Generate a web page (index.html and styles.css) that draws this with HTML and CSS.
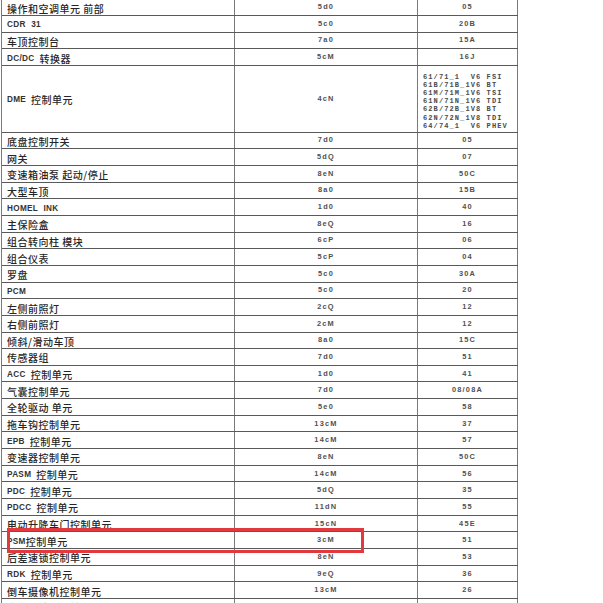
FILE: index.html
```html
<!DOCTYPE html>
<html lang="zh-CN">
<head>
<meta charset="utf-8">
<title>控制单元列表</title>
<link rel="stylesheet" href="styles.css">
</head>
<body>
<div class="sheet">
  <div class="row"><div class="name">操作和空调单元 前部</div><div class="code">5d0</div><div class="num">05</div></div>
  <div class="row"><div class="name"><span class="lat">CDR 31</span></div><div class="code">5c0</div><div class="num">20B</div></div>
  <div class="row"><div class="name">车顶控制台</div><div class="code">7a0</div><div class="num">15A</div></div>
  <div class="row"><div class="name"><span class="lat gap">DC/DC</span>转换器</div><div class="code">5cM</div><div class="num">16J</div></div>
  <div class="row tall"><div class="name"><span class="lat gap">DME</span>控制单元</div><div class="code">4cN</div><div class="num list">61/71_1  V6 FSI
61B/71B_1V6 BT
61M/71M_1V6 TSI
61N/71N_1V6 TDI
62B/72B_1V8 BT
62N/72N_1V8 TDI
64/74_1  V6 PHEV</div></div>
  <div class="row"><div class="name">底盘控制开关</div><div class="code">7d0</div><div class="num">05</div></div>
  <div class="row"><div class="name">网关</div><div class="code">5dQ</div><div class="num">07</div></div>
  <div class="row"><div class="name">变速箱油泵 起动/停止</div><div class="code">8eN</div><div class="num">50C</div></div>
  <div class="row"><div class="name">大型车顶</div><div class="code">8a0</div><div class="num">15B</div></div>
  <div class="row"><div class="name"><span class="lat">HOMEL INK</span></div><div class="code">1d0</div><div class="num">40</div></div>
  <div class="row"><div class="name">主保险盒</div><div class="code">8eQ</div><div class="num">16</div></div>
  <div class="row"><div class="name">组合转向柱 模块</div><div class="code">6cP</div><div class="num">06</div></div>
  <div class="row"><div class="name">组合仪表</div><div class="code">5cP</div><div class="num">04</div></div>
  <div class="row"><div class="name">罗盘</div><div class="code">5c0</div><div class="num">30A</div></div>
  <div class="row"><div class="name"><span class="lat">PCM</span></div><div class="code">5c0</div><div class="num">20</div></div>
  <div class="row"><div class="name">左侧前照灯</div><div class="code">2cQ</div><div class="num">12</div></div>
  <div class="row"><div class="name">右侧前照灯</div><div class="code">2cM</div><div class="num">12</div></div>
  <div class="row"><div class="name">倾斜/滑动车顶</div><div class="code">8a0</div><div class="num">15C</div></div>
  <div class="row"><div class="name">传感器组</div><div class="code">7d0</div><div class="num">51</div></div>
  <div class="row"><div class="name"><span class="lat gap">ACC</span>控制单元</div><div class="code">1d0</div><div class="num">41</div></div>
  <div class="row"><div class="name">气囊控制单元</div><div class="code">7d0</div><div class="num">08/08A</div></div>
  <div class="row"><div class="name">全轮驱动 单元</div><div class="code">5e0</div><div class="num">58</div></div>
  <div class="row"><div class="name">拖车钩控制单元</div><div class="code">13cM</div><div class="num">37</div></div>
  <div class="row"><div class="name"><span class="lat gap">EPB</span>控制单元</div><div class="code">14cM</div><div class="num">57</div></div>
  <div class="row"><div class="name">变速器控制单元</div><div class="code">8eN</div><div class="num">50C</div></div>
  <div class="row"><div class="name"><span class="lat gap">PASM</span>控制单元</div><div class="code">14cM</div><div class="num">56</div></div>
  <div class="row"><div class="name"><span class="lat gap">PDC</span>控制单元</div><div class="code">5dQ</div><div class="num">35</div></div>
  <div class="row"><div class="name"><span class="lat gap">PDCC</span>控制单元</div><div class="code">11dN</div><div class="num">55</div></div>
  <div class="row"><div class="name">电动升降车门控制单元</div><div class="code">15cN</div><div class="num">45E</div></div>
  <div class="row"><div class="name"><span class="lat">PSM</span>控制单元</div><div class="code">3cM</div><div class="num">51</div></div>
  <div class="row"><div class="name">后差速锁控制单元</div><div class="code">8eN</div><div class="num">53</div></div>
  <div class="row"><div class="name"><span class="lat gap">RDK</span>控制单元</div><div class="code">9eQ</div><div class="num">36</div></div>
  <div class="row"><div class="name">倒车摄像机控制单元</div><div class="code">13cM</div><div class="num">26</div></div>
  <div class="row"><div class="name">变道辅助控制单元 主控</div><div class="code">3cM</div><div class="num">60</div></div>
  <div class="highlight"></div>
</div>
</body>
</html>
```
FILE: styles.css
```css
html, body {
  margin: 0;
  padding: 0;
  background: #ffffff;
}
body {
  width: 603px;
  height: 603px;
  overflow: hidden;
}
.sheet {
  position: relative;
  width: 517px;
  margin-left: 1px;
  margin-top: -0.67px;
  border-left: 1px solid #7a7a7a;
  box-sizing: border-box;
}
.row {
  display: grid;
  grid-template-columns: 233px 183px 100px;
  height: 16.667px;
  border-bottom: 1px solid #5a5a5a;
  box-sizing: border-box;
}
.row.tall {
  height: 66.667px;
}
.row > div {
  border-right: 1px solid #7a7a7a;
  display: flex;
  align-items: center;
  min-width: 0;
  overflow: hidden;
}
.name {
  padding: 3px 0 0 5px;
  font-family: "Noto Sans CJK SC", "Liberation Sans", sans-serif;
  font-size: 10px;
  font-weight: 500;
  letter-spacing: 0.5px;
  color: #262626;
  white-space: nowrap;
  line-height: 10px;
}
.lat {
  font-family: "Liberation Sans", sans-serif;
  font-size: 8.2px;
  font-weight: bold;
  letter-spacing: 0.3px;
  word-spacing: 3px;
  color: #333333;
}
.lat.gap {
  margin-right: 5px;
}
.code, .num {
  justify-content: center;
  font-family: "Liberation Sans", sans-serif;
  font-size: 7.4px;
  font-weight: bold;
  letter-spacing: 1.2px;
  color: #505050;
  line-height: 8px;
}
.num.list {
  justify-content: flex-start;
  align-items: center;
  padding: 5px 0 0 5px;
  font-family: "Liberation Mono", monospace;
  font-weight: bold;
  font-size: 7px;
  letter-spacing: 1.1px;
  line-height: 8.2px;
  white-space: pre;
  color: #4a4a4a;
}
.highlight {
  position: absolute;
  left: 5px;
  top: 529px;
  width: 357px;
  height: 25px;
  border: 3px solid #e1393d;
  box-sizing: border-box;
}
```
